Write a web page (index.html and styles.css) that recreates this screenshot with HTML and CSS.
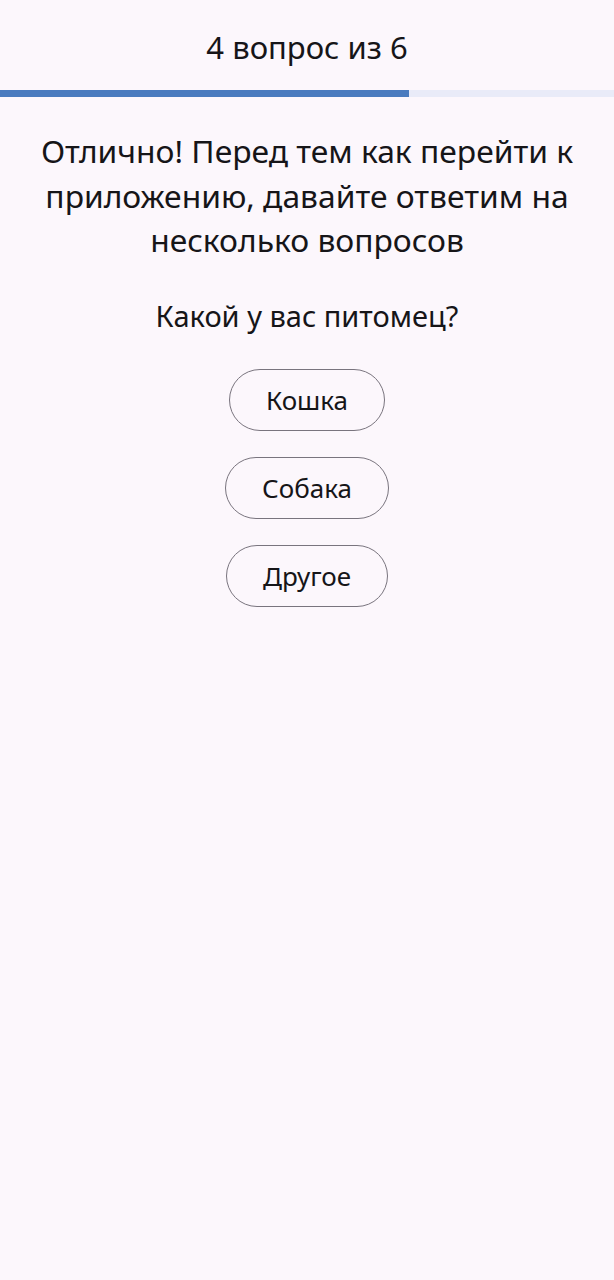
FILE: index.html
```html
<!DOCTYPE html>
<html lang="ru">
<head>
<meta charset="utf-8">
<link rel="stylesheet" href="styles.css">
</head>
<body>
<div class="screen">
  <header class="top">
    <div class="counter">4 вопрос из 6</div>
  </header>
  <div class="progress"><div class="fill" style="width: 66.67%"></div></div>
  <main class="content">
    <h1 class="intro">Отлично! Перед тем как перейти к приложению, давайте ответим на несколько вопросов</h1>
    <p class="question">Какой у вас питомец?</p>
    <div class="options">
      <button class="option">Кошка</button>
      <button class="option">Собака</button>
      <button class="option">Другое</button>
    </div>
  </main>
</div>
</body>
</html>
```
FILE: styles.css
```css
html, body {
  margin: 0;
  padding: 0;
  background: #fcf7fc;
}
body {
  font-family: "Noto Sans", "Open Sans", sans-serif;
  color: #161518;
}
.screen {
  width: 614px;
  min-height: 1280px;
  display: flex;
  flex-direction: column;
}
.top {
  height: 90px;
  display: flex;
  align-items: center;
  justify-content: center;
}
.counter {
  font-size: 31px;
  line-height: 1;
  padding-top: 4px;
}
.progress {
  height: 7px;
  background: #e9ebf8;
}
.fill {
  height: 100%;
  background: #4a7bbf;
}
.content {
  display: flex;
  flex-direction: column;
  align-items: center;
  padding: 32px 20px 0;
}
.intro {
  margin: 0;
  font-weight: 400;
  font-size: 31.8px;
  line-height: 44.5px;
  text-align: center;
}
.question {
  margin: 35px 0 0;
  font-size: 29px;
  line-height: 36px;
}
.options {
  margin-top: 35px;
  display: flex;
  flex-direction: column;
  align-items: center;
  gap: 26px;
}
.option {
  font-family: inherit;
  font-size: 26px;
  color: #161518;
  background: transparent;
  border: 1.5px solid #79747e;
  border-radius: 31px;
  height: 62px;
  padding: 0 36px;
}
```
